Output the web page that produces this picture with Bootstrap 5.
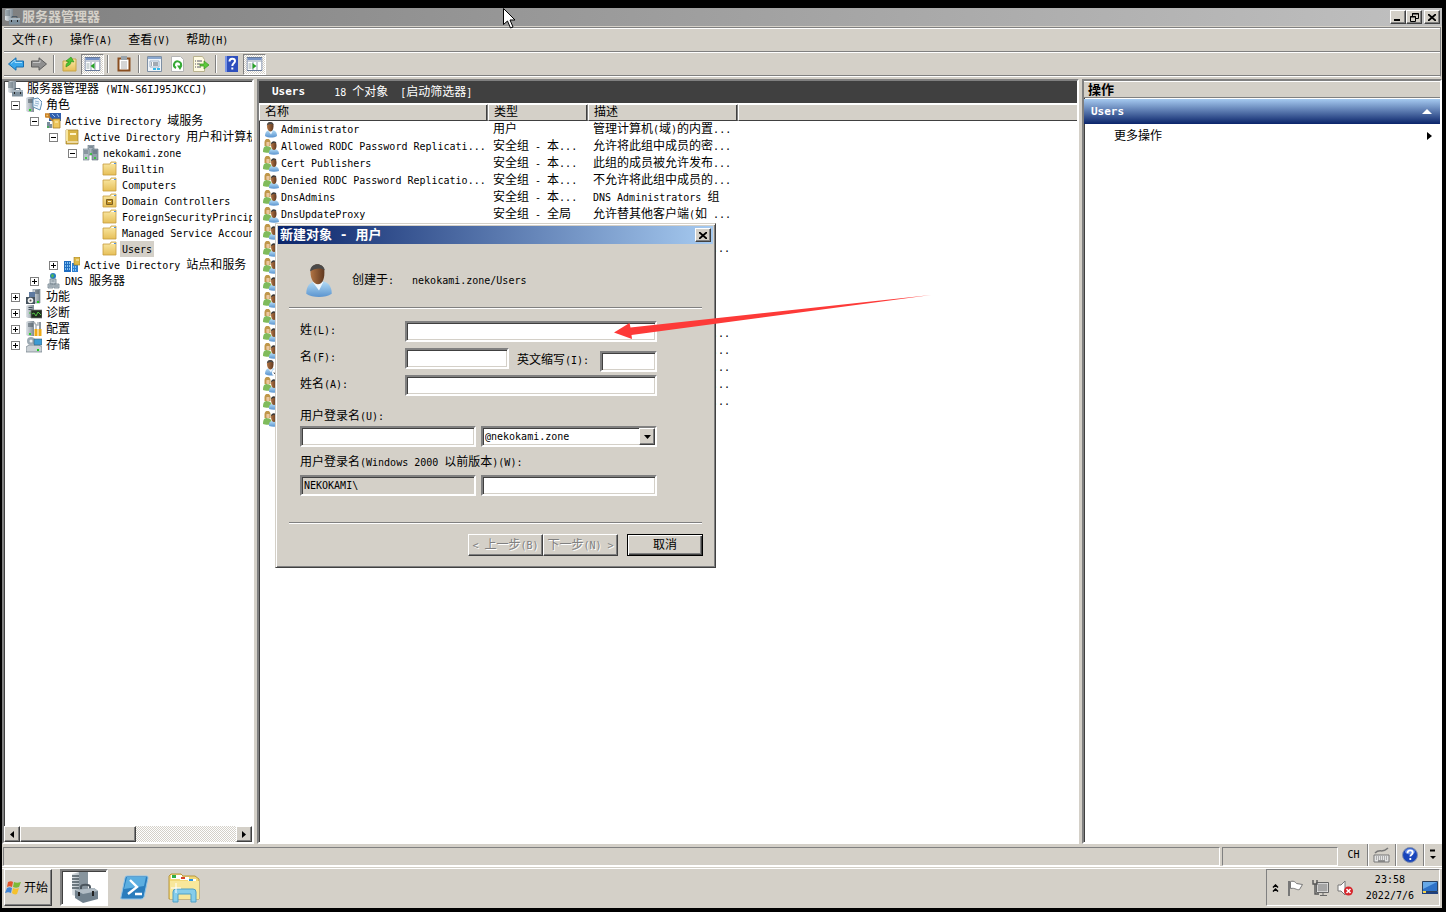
<!DOCTYPE html>
<html lang="zh-CN">
<head>
<meta charset="utf-8">
<meta name="viewport" content="width=device-width, initial-scale=1">
<title>服务器管理器</title>
<link href="https://cdn.jsdelivr.net/npm/bootstrap@5.3.0/dist/css/bootstrap.min.css" rel="stylesheet">
<style>
:root{--face:#d4d0c8;--shade:#808080;--dark:#404040}
body{background:#000;color:#000;font-family:"DejaVu Sans Mono","Noto Sans CJK SC",monospace;font-size:12px;line-height:16px;white-space:nowrap;padding:8px 4px 4px 2px;overflow:hidden}
button,input,select{font:inherit;color:inherit;border-radius:0;padding:0;margin:0}
svg{display:block;flex:none}
.en{font-size:10px;white-space:pre}
.cap-en{font-size:11px;font-weight:700}
.face{background:var(--face)}
.out{background:var(--face);border:1px solid;border-color:#fff var(--dark) var(--dark) #fff;box-shadow:inset -1px -1px var(--shade)}
.sunk{background:#fff;border:2px solid;border-color:var(--shade) #fff #fff var(--shade);box-shadow:inset 1px 1px var(--dark)}
.titlebar{height:18px;padding:0 2px;gap:2px;background:linear-gradient(90deg,#808080,#c0c0c0);color:var(--face);font-size:13px;font-weight:700}
.capbtn{width:16px;height:14px}
.titlebar .capbtn+.capbtn{margin-left:-2px}
.titlebar .capbtn:last-child{margin-left:0}
.frame{margin:1px 1px 0 2px;border:1px solid var(--shade);border-left:0;border-bottom-color:#fff}
.menubar{height:24px;border-top:1px solid #fff;border-bottom:1px solid var(--shade)}
.menubar a{color:#000;text-decoration:none;padding:1px 8px 0}
.toolbar{height:24px;border-top:1px solid #fff;border-bottom:1px solid var(--shade)}
.tool{width:23px;height:21px;border:0;background:none;display:flex;align-items:center;justify-content:center}
.tool.on{background:repeating-conic-gradient(#fff 0 25%,var(--face) 0 50%) 0 0/2px 2px;border:1px solid;border-color:var(--shade) #fff #fff var(--shade)}
.split{width:2px;height:18px;margin:0 3px;border-left:1px solid var(--shade);border-right:1px solid #fff}
.work{margin-top:2px;gap:3px;min-height:0}
.treepane{width:252px}
.actpane{width:360px}
.tree,.tree ul{list-style:none;margin:0;padding:0}
.tree{padding:0 0 0 3px}
.tree ul ul{padding-left:19px}
.node{display:flex;align-items:center;height:16px}
.node .cell{width:19px;flex:none;display:flex;padding-left:4px}
.box{width:9px;height:9px;border:1px solid var(--shade);background:linear-gradient(#000,#000) center/5px 1px no-repeat #fff}
.box.plus{background:linear-gradient(#000,#000) center/5px 1px no-repeat,linear-gradient(#000,#000) center/1px 5px no-repeat,#fff}
.node .txt{padding:1px 2px 0;margin-left:2px;line-height:15px}
.hbar{height:16px;background:repeating-conic-gradient(#fff 0 25%,var(--face) 0 50%) 0 0/2px 2px}
.hbar button{width:16px}
.thumb{width:116px}
.banner{height:23px;gap:29px;background:var(--dark);color:#fff;border-bottom:1px solid #fff;padding-left:13px}
.list{table-layout:fixed;width:100%;border-collapse:separate;border-spacing:0}
.list th{height:17px;line-height:15px;font-weight:400;padding:0 5px;background:var(--face);border:1px solid;border-color:#fff var(--shade) var(--dark) #fff;box-shadow:inset -1px 0 var(--dark)}
.list th:last-child{border-right:0;box-shadow:none}
.list td{height:17px;line-height:17px;padding:0 5px;overflow:hidden}
.list td:first-child{padding:0 0 0 4px}
.list td:first-child div{display:flex;align-items:center;gap:2px;height:17px}
.list td.tail{text-align:right;padding-right:8px}
.acthead{height:17px;line-height:15px;font-size:13px;font-weight:700;border-top:1px solid #fff;border-bottom:1px solid var(--shade);padding-left:4px}
.actgrp{height:25px;margin-top:1px;background:linear-gradient(#a6caf0,#0a246a);color:#fff;padding:0 8px 0 7px}
.actmore{padding:4px 8px 0 30px}
.dlg{position:absolute;left:16px;top:142px;width:441px;padding:2px 2px 11px;border:1px solid;border-color:var(--face) var(--dark) var(--dark) var(--face);box-shadow:inset 1px 1px #fff,inset -1px -1px var(--shade)}
.dlgcap{height:18px;padding:0 2px;background:linear-gradient(90deg,#0a246a,#a6caf0);color:#fff;font-size:13px;font-weight:700}
.etch{height:2px;margin:0 11px;background:linear-gradient(var(--shade) 50%,#fff 50%)}
.who{height:63px;padding:10px 24px 0}
.who .lbl{margin:0 18px 0 15px}
.fields{padding:12px 56px 26px 22px}
.fld{display:grid;grid-template-columns:105px 104px 91px 57px;height:27px;align-items:start}
.fld label{line-height:18px}
.fld .low{padding-top:3px}
.wide{grid-column:span 3}
.lab-u{display:block;padding:6px 0 1px}
.lab-w{display:block;padding:7px 0 4px}
.inp{height:21px;width:100%;border:2px solid;border-color:var(--shade) #fff #fff var(--shade);box-shadow:inset 1px 1px var(--dark),inset -1px -1px var(--face);background:#fff;font-size:10px;padding:0 2px;outline:0}
.wide.inp{width:252px}
.inp[readonly]{background:var(--face)}
.pair{display:grid;grid-template-columns:176px 176px;gap:5px}
.combo{position:relative}
.combo select{appearance:none}
.combo .drop{position:absolute;right:2px;top:2px;width:16px;height:17px;pointer-events:none}
.push{width:75px;height:22px;color:#000}
.push:disabled{color:var(--shade);text-shadow:1px 1px #fff}
.push.def{width:76px;margin-left:9px;border-color:#000;box-shadow:inset 1px 1px #fff,inset -1px -1px var(--dark),inset -2px -2px var(--shade)}
.dlgfoot{padding:10px 10px 0}
.pointer{position:absolute;left:355px;top:213px}
.mouse{position:absolute;left:503px;top:8px;z-index:9}
.status{height:22px;gap:2px;padding:0 1px}
.seg{margin-top:3px;border:1px solid;border-color:var(--shade) #fff #fff var(--shade)}
.seg.side{width:116px}
.lang{width:101px}
.lang>*{width:28px;border-right:1px solid var(--shade);box-shadow:1px 0 #fff;display:flex;align-items:center;justify-content:center}
.lang>:last-child{width:17px;border:0;box-shadow:none}
.taskbar{height:42px;border-top:1px solid #fff;box-shadow:inset 0 1px var(--face),inset 0 2px #fff;padding:2px 2px 2px}
.start{width:48px;gap:2px}
.task{width:48px;margin-left:2px;display:flex;align-items:center;justify-content:center;border:0;background:none}
.task.sunk{margin-left:8px;background:#fff;border:2px solid;border-color:var(--shade) #fff #fff var(--shade)}
.tray{width:174px;border:1px solid;border-color:var(--shade) #fff #fff var(--shade);padding:0 1px 0 5px;gap:8px}
</style>
</head>
<body class="vh-100 d-flex flex-column">
<svg width="0" height="0" class="position-absolute" aria-hidden="true">
<defs>
<linearGradient id="gb" x1="0" y1="0" x2="0" y2="1"><stop offset="0" stop-color="#b4dcf6"/><stop offset="1" stop-color="#5b94cf"/></linearGradient>
<linearGradient id="gy" x1="0" y1="0" x2="0" y2="1"><stop offset="0" stop-color="#fbeaa8"/><stop offset="1" stop-color="#e6bf58"/></linearGradient>
<linearGradient id="gs" x1="0" y1="0" x2="1" y2="0"><stop offset="0" stop-color="#dfe4e8"/><stop offset="1" stop-color="#7d8a94"/></linearGradient>
<linearGradient id="gh" x1="0" y1="0" x2="1" y2="0"><stop offset="0" stop-color="#b27443"/><stop offset="1" stop-color="#5f3820"/></linearGradient>
</defs>
<symbol id="srv" viewBox="0 0 16 16"><path d="M0 1l2-1h6v13H2l-2-1z" fill="url(#gs)"/><path d="M2.500 2.500h4M2.500 4.500h4" stroke="#44525c"/><path d="M3 8h2" stroke="#35c035"/></symbol>
<symbol id="mgr" viewBox="0 0 16 16"><path d="M1 1l2-1h6v12H3l-2-1z" fill="url(#gs)"/><path d="M1 2h5M1 4h5M1 6h5" stroke="#4a5a66" stroke-width=".8"/><path d="M8 9V7.500h5V9" fill="none" stroke="#4c5a66"/><path d="M5 9h11v6.500H5z" fill="#7e909d"/><path d="M5 9h11v2H5z" fill="#a9b7c1"/><path d="M7.500 11v2M13.500 11v2" stroke="#222"/></symbol>
<symbol id="roles" viewBox="0 0 16 16"><path d="M0 1l2-1h6v15H2l-2-1z" fill="url(#gs)"/><path d="M2 3h5M2 5h5" stroke="#44525c"/><path d="M3 13h2" stroke="#2fd12f" stroke-width="2"/><path d="M7 2l5-1 4 4-2 8-7-3z" fill="#edf5fb" stroke="#5f8fb5"/><path d="M9 4l4 1M9 6l4 1M8 8l4 1" stroke="#7da6c8" stroke-width=".8"/></symbol>
<symbol id="adds" viewBox="0 0 16 16"><path d="M4 0h12v8H4z" fill="#2f5fae"/><path d="M7 1l3 3M12 1l2 3" stroke="#9dc1ec"/><path d="M0 1h4v3H1zM4 4l4 4" fill="#f3c46c" stroke="#c98024" stroke-width="1.600"/><path d="M8 6h7v9H8z" fill="#edc65c" stroke="#a88228" stroke-width=".8"/><path d="M10 9h3" stroke="#fff3c2"/><path d="M2 9h3v6H2zM5 11h2v4H5z" fill="#798d9b"/><path d="M2 14h2" stroke="#25c025"/></symbol>
<symbol id="book" viewBox="0 0 16 16"><path d="M2 1h12v14H2z" fill="#d9b445" stroke="#9d7d27" stroke-width=".7"/><path d="M2 1h2v11H2z" fill="#f8e69f"/><path d="M6 4h6v2H6z" fill="#fff4c9"/><path d="M3 12.500h11v1H3z" fill="#fff"/></symbol>
<symbol id="dom" viewBox="0 0 16 16"><path d="M5 0h6v10H5z" fill="#a9b5bd" stroke="#60707c" stroke-width=".6"/><path d="M0 4h6v11H0z" fill="#b7c2c9" stroke="#687884" stroke-width=".6"/><path d="M9 4h6v11H9z" fill="#92a0aa" stroke="#5e6e7a" stroke-width=".6"/><path d="M1 6h4M1 8h4M10 6h4M10 8h4M6 2h4" stroke="#43545f" stroke-width=".8"/><path d="M2 13h2M11 13h2M7 9h2" stroke="#22cc22" stroke-width="1.500"/></symbol>
<symbol id="fold" viewBox="0 0 16 16"><path d="M1 14V3h7l1-2h5v13z" fill="url(#gy)" stroke="#c79d3e" stroke-width=".8"/><path d="M9.500 2.500h4" stroke="#fff"/><path d="M12 2.500h2" stroke="#4c91df"/></symbol>
<symbol id="ou" viewBox="0 0 16 16"><use href="#fold"/><path d="M4.500 6.500h6v5h-6z" fill="#c19126" stroke="#7e6020"/><path d="M6 8.500h3" stroke="#fff4bf"/></symbol>
<symbol id="sites" viewBox="0 0 16 16"><path d="M0 4h7v11H0z" fill="#1e6cc0"/><path d="M8 6h6v9H8z" fill="#2d7fd0"/><path d="M1 6h5M1 9h5M1 12h5M9 10h4M9 13h4" stroke="#a2dcff" stroke-dasharray="1 1" stroke-width="1.500"/><path d="M10 0h6v8h-6z" fill="#dfb948" stroke="#9d7d27" stroke-width=".6"/><path d="M12 3h3" stroke="#fff4c9"/></symbol>
<symbol id="dns" viewBox="0 0 16 16"><circle cx="8" cy="3" r="3" fill="#267fc0"/><path d="M6 2l2-1 1 2-2 2z" fill="#52bb4c"/><path d="M5 6h6v5H5zM3 11h5v4H3zM9 11h5v4H9z" fill="#c1cbd2" stroke="#74838e" stroke-width=".8"/><path d="M6.500 8h3M4 13h3M10 13h3" stroke="#5f6f7a" stroke-width=".7"/></symbol>
<symbol id="feat" viewBox="0 0 16 16"><path d="M7 0h7v14H7z" fill="url(#gs)" stroke="#71808b" stroke-width=".6"/><path d="M3 3h6v9H3z" fill="#5e7aa0"/><path d="M9 2h4M9 4h4" stroke="#44525c"/><path d="M0 8h9v7H0z" fill="#45525c"/><circle cx="4.500" cy="11.500" r="2.800" fill="#eee"/><circle cx="4.500" cy="11.500" r="1" fill="#555"/><path d="M11 13h2" stroke="#2c2" stroke-width="2"/></symbol>
<symbol id="diag" viewBox="0 0 16 16"><use href="#srv"/><path d="M5 5h11v8H5z" fill="#1f2a1e" stroke="#777" stroke-width=".7"/><path d="M6 9l2-1 2 3 2-4 3 3" fill="none" stroke="#55c345"/></symbol>
<symbol id="conf" viewBox="0 0 16 16"><path d="M0 1l2-1h6v15H2l-2-1z" fill="url(#gs)"/><path d="M2 3h5M2 5h5" stroke="#44525c"/><path d="M3 13h2" stroke="#2fd12f" stroke-width="2"/><path d="M8 1l2 3 2 0v-3M10 4v5" fill="none" stroke="#aeb5ba" stroke-width="1.500"/><path d="M10 8v7M14 8v7" stroke="#eeaa16" stroke-width="3"/><path d="M14 1v7" stroke="#8d989f" stroke-width="2"/></symbol>
<symbol id="stor" viewBox="0 0 16 16"><path d="M0 10l3-2h10l3 2v5H0z" fill="#cbd1d5" stroke="#6f7d88" stroke-width=".7"/><circle cx="5" cy="4" r="4" fill="#9daab3"/><circle cx="5" cy="4" r="1.500" fill="#eee"/><path d="M8 2h8v6H8z" fill="#3c9bd3" stroke="#41606f" stroke-width=".6"/><path d="M11 13h2" stroke="#2c2" stroke-width="2"/></symbol>
<symbol id="usr" viewBox="0 0 16 16"><path d="M2 14c0-4 2-6 6-6s6 2 6 6c-3 2-9 2-12 0z" fill="url(#gb)"/><path d="M5 8.500l3 4 2-4z" fill="#eef6fc"/><path d="M4 4c0-5 6-5 6.500-1 .3 4-1 6.500-3 6.500S4 7 4 4z" fill="url(#gh)"/><path d="M3.800 3.500C4-1 10-1 10.800 3 9 1.500 6 2 3.800 3.500z" fill="#4a4a4a"/></symbol>
<symbol id="dis" viewBox="0 0 16 16"><use href="#usr"/><circle cx="12.500" cy="12.500" r="3.500" fill="#fff"/><path d="M12.500 10v4M11 12.500l1.500 2 1.500-2" fill="none" stroke="#222"/></symbol>
<symbol id="grp" viewBox="0 0 16 16"><path d="M0 13c0-4 1-6 4-6s5 2 5 6c-2 1-7 1-9 0z" fill="#7fbb5c"/><path d="M1.500 3.500c0-5 6-5 6 0V7h-6z" fill="#c0974a"/><path d="M3.500 3h3c.3 3 0 4.500-1.500 4.500S3 6 3.500 3z" fill="#eac7a0"/><path d="M6 15c0-4 1-5 4-5s6 1 6 5c-3 1-7 1-10 0z" fill="url(#gb)"/><path d="M8 6c0-4 5.500-4 5.500 0 .3 3-1 5-2.500 5S8 9 8 6z" fill="url(#gh)"/><path d="M8 5.500c0-4 5-4 5.500-1-1-1-4-1-5.500 1z" fill="#333"/></symbol>
<symbol id="pane" viewBox="0 0 16 16"><path d="M.5 1.500h15v13H.5z" fill="#fff" stroke="#66799a"/><path d="M1 3h14" stroke="#7592c6" stroke-width="2"/><path d="M1 5h14M6.500 6v8M10.500 6v8" stroke="#8f9cb0"/><path d="M2 8h3M2 10h3M2 12h3" stroke="#9aa"/></symbol>
<symbol id="x" viewBox="0 0 8 7"><path d="M0 0l8 7M8 0L0 7" stroke="#000" stroke-width="1.800"/></symbol>
<symbol id="hlp" viewBox="0 0 16 16"><circle cx="8" cy="8" r="7.500" fill="#1945bb" stroke="#8290ac"/><ellipse cx="8" cy="4.500" rx="5" ry="3" fill="#648be6"/><path d="M5.500 6.300c0-4 5.200-3.500 5.200-.5 0 2-2.400 1.800-2.400 3.700M8.300 11v2" stroke="#fff" stroke-width="1.800" fill="none"/></symbol>
</svg>

<header class="face">
  <div class="titlebar d-flex align-items-center">
    <svg width="16" height="16"><use href="#mgr"/></svg><span class="flex-grow-1">服务器管理器</span>
    <button class="out capbtn d-flex align-items-end justify-content-center" aria-label="最小化"><svg width="8" height="4"><path d="M0 1h6" stroke="#000" stroke-width="2"/></svg></button>
    <button class="out capbtn d-flex align-items-center justify-content-center" aria-label="还原"><svg width="9" height="9"><path d="M2.500 3V.500h6v5H6M.500 3.500h5v5h-5zM2 1h7M0 4h6" fill="none" stroke="#000"/></svg></button>
    <button class="out capbtn d-flex align-items-center justify-content-center" aria-label="关闭"><svg width="8" height="7"><use href="#x"/></svg></button>
  </div>
  <div class="frame">
    <nav class="menubar d-flex align-items-center">
      <a href="#">文件<span class="en">(F)</span></a><a href="#">操作<span class="en">(A)</span></a><a href="#">查看<span class="en">(V)</span></a><a href="#">帮助<span class="en">(H)</span></a>
    </nav>
    <div class="toolbar d-flex align-items-center">
      <button class="tool" aria-label="后退"><svg width="16" height="14"><path d="M.5 7L8 .8V4h7.500v6H8v3.200z" fill="#39a6ea" stroke="#176eb0"/><path d="M3 6.500L7 3v2.500h7" fill="none" stroke="#a9e0ff"/></svg></button>
      <button class="tool" aria-label="前进"><svg width="16" height="14"><path d="M15.500 7L8 .8V4H.5v6H8v3.200z" fill="#8f8f8f" stroke="#5d5d5d"/><path d="M2 5.500h7V3" fill="none" stroke="#c5c5c5"/></svg></button>
      <span class="split"></span>
      <button class="tool" aria-label="上移"><svg width="16" height="16"><path d="M1 15V5h6l1-2h6v12z" fill="url(#gy)" stroke="#c9a548"/><path d="M4 11c0-4 1-4 3-5L4 5l5-4 3 5-3-.5C9 9 7 9 4 11z" fill="#4bc431" stroke="#2c8a1a" stroke-width=".6"/></svg></button>
      <button class="tool on" aria-label="控制台树"><svg width="17" height="16" viewBox="0 0 16 16"><use href="#pane"/><path d="M10 7v6l-4-3z" fill="#27a327"/></svg></button>
      <span class="split"></span>
      <button class="tool" aria-label="粘贴"><svg width="14" height="16"><path d="M1.500 2.500h11v12h-11z" fill="#fff" stroke="#8a4e20" stroke-width="2"/><path d="M4 0h6v4H4z" fill="#9aa4ac"/><path d="M4 6h6M4 8h6M4 10h6M4 12h6" stroke="#aaa"/></svg></button>
      <span class="split"></span>
      <button class="tool" aria-label="属性"><svg width="16" height="16"><path d="M.5.500h14v15H.5z" fill="#f0f4f8" stroke="#7e8fa3"/><path d="M1 2h13" stroke="#8ba8cf" stroke-width="2"/><path d="M3 5h9v6H3z" fill="#fff" stroke="#9db1c8"/><path d="M4 7h1M6 7h5M4 9h1M6 9h5" stroke="#456"/><path d="M6 13h3M10 13h3" stroke="#39b8e8" stroke-width="2"/></svg></button>
      <button class="tool" aria-label="刷新"><svg width="14" height="16"><path d="M.5.500h9l3 3v12H.5z" fill="#fff" stroke="#b5b5b5"/><path d="M5 12A3.500 3.500 0 1 1 9.800 10" fill="none" stroke="#35a935" stroke-width="2"/><path d="M6 9.500h5.500L9 14z" fill="#35a935"/></svg></button>
      <button class="tool" aria-label="导出列表"><svg width="16" height="16"><path d="M.5.500h9l2 3v12H.5z" fill="#fffbe2" stroke="#b9b28e"/><path d="M2 5h1M4 5h5M2 8h1M4 8h3M2 11h1M4 11h4" stroke="#556"/><path d="M7 8h4V5l5 4-5 4v-3H7z" fill="#5bc93b" stroke="#3b9722" stroke-width=".7"/></svg></button>
      <span class="split"></span>
      <button class="tool" aria-label="帮助"><svg width="14" height="16"><path d="M0 0h13v16H0z" fill="#2e4fbd"/><path d="M0 0h2v16H0z" fill="#7b96e6"/><path d="M4.500 5.500c0-4 5.500-3.500 5.500-.5 0 2.500-2.700 2-2.700 5M7.300 11.500v2" stroke="#fff" stroke-width="2" fill="none"/></svg></button>
      <button class="tool on" aria-label="操作窗格"><svg width="17" height="16" viewBox="0 0 16 16"><use href="#pane"/><path d="M6 7v6l4-3z" fill="#27a327"/></svg></button>
    </div>
  </div>
</header>

<main class="face flex-grow-1 d-flex flex-column" style="min-height:0">
  <div class="work d-flex flex-grow-1">
    <aside class="treepane sunk d-flex flex-column flex-shrink-0 overflow-hidden">
      <ul class="tree flex-grow-1 overflow-hidden">
        <li><div class="node"><svg width="16" height="16"><use href="#mgr"/></svg><span class="txt">服务器管理器<span class="en"> (WIN-S6IJ95JKCCJ)</span></span></div>
          <ul>
            <li><div class="node"><span class="cell"><i class="box"></i></span><svg width="16" height="16"><use href="#roles"/></svg><span class="txt">角色</span></div>
              <ul>
                <li><div class="node"><span class="cell"><i class="box"></i></span><svg width="16" height="16"><use href="#adds"/></svg><span class="txt"><span class="en">Active Directory </span>域服务</span></div>
                  <ul>
                    <li><div class="node"><span class="cell"><i class="box"></i></span><svg width="16" height="16"><use href="#book"/></svg><span class="txt"><span class="en">Active Directory </span>用户和计算机</span></div>
                      <ul>
                        <li><div class="node"><span class="cell"><i class="box"></i></span><svg width="16" height="16"><use href="#dom"/></svg><span class="txt en">nekokami.zone</span></div>
                          <ul id="kids"></ul>
                        </li>
                      </ul>
                    </li>
                    <li><div class="node"><span class="cell"><i class="box plus"></i></span><svg width="16" height="16"><use href="#sites"/></svg><span class="txt"><span class="en">Active Directory </span>站点和服务</span></div></li>
                  </ul>
                </li>
                <li><div class="node"><span class="cell"><i class="box plus"></i></span><svg width="16" height="16"><use href="#dns"/></svg><span class="txt"><span class="en">DNS </span>服务器</span></div></li>
              </ul>
            </li>
            <li><div class="node"><span class="cell"><i class="box plus"></i></span><svg width="16" height="16"><use href="#feat"/></svg><span class="txt">功能</span></div></li>
            <li><div class="node"><span class="cell"><i class="box plus"></i></span><svg width="16" height="16"><use href="#diag"/></svg><span class="txt">诊断</span></div></li>
            <li><div class="node"><span class="cell"><i class="box plus"></i></span><svg width="16" height="16"><use href="#conf"/></svg><span class="txt">配置</span></div></li>
            <li><div class="node"><span class="cell"><i class="box plus"></i></span><svg width="16" height="16"><use href="#stor"/></svg><span class="txt">存储</span></div></li>
          </ul>
        </li>
      </ul>
      <div class="hbar d-flex">
        <button class="out d-flex align-items-center justify-content-center" aria-label="向左"><svg width="4" height="7"><path d="M4 0v7L0 3.500z"/></svg></button>
        <div class="out thumb"></div>
        <button class="out ms-auto d-flex align-items-center justify-content-center" aria-label="向右"><svg width="4" height="7"><path d="M0 0v7l4-3.500z"/></svg></button>
      </div>
    </aside>

    <section class="sunk flex-grow-1 position-relative" style="min-width:0">
      <div class="banner d-flex align-items-center"><span class="cap-en">Users</span><span><span class="en">18 </span>个对象<span class="en">  [</span>启动筛选器<span class="en">]</span></span></div>
      <table class="list">
        <colgroup><col style="width:229px"><col style="width:100px"><col style="width:150px"><col></colgroup>
        <thead><tr><th>名称</th><th>类型</th><th>描述</th><th></th></tr></thead>
        <tbody id="rows"></tbody>
      </table>

      <form class="dlg face" onsubmit="return false">
        <div class="dlgcap d-flex align-items-center"><span class="flex-grow-1">新建对象 - 用户</span><button type="button" class="out capbtn d-flex align-items-center justify-content-center" aria-label="关闭"><svg width="8" height="7"><use href="#x"/></svg></button></div>
        <div class="who d-flex align-items-center"><svg width="34" height="34"><use href="#usr"/></svg><span class="lbl ms-3">创建于<span class="en">:</span></span><span class="en">nekokami.zone/Users</span></div>
        <div class="etch"></div>
        <div class="fields">
          <div class="fld"><label for="sn">姓<span class="en">(L):</span></label><input id="sn" class="inp wide" autofocus></div>
          <div class="fld"><label for="gn">名<span class="en">(F):</span></label><input id="gn" class="inp"><label for="ini" class="low ps-2">英文缩写<span class="en">(I):</span></label><div class="low d-flex"><input id="ini" class="inp"></div></div>
          <div class="fld"><label for="fn">姓名<span class="en">(A):</span></label><input id="fn" class="inp wide"></div>
          <label for="upn" class="lab-u">用户登录名<span class="en">(U):</span></label>
          <div class="pair"><input id="upn" class="inp"><div class="combo"><select class="inp d-block" aria-label="域后缀"><option>@nekokami.zone</option></select><span class="drop out d-flex align-items-center justify-content-center"><svg width="7" height="4"><path d="M0 0h7L3.500 4z"/></svg></span></div></div>
          <label for="sam" class="lab-w">用户登录名<span class="en">(Windows 2000 </span>以前版本<span class="en">)(W):</span></label>
          <div class="pair"><input class="inp" readonly value="NEKOKAMI\" aria-label="域"><input id="sam" class="inp"></div>
        </div>
        <div class="etch"></div>
        <div class="dlgfoot d-flex justify-content-end"><button class="out push" disabled><span class="en">&lt; </span>上一步<span class="en">(B)</span></button><button class="out push" disabled>下一步<span class="en">(N) &gt;</span></button><button type="button" class="out push def">取消</button></div>
      </form>
      <svg class="pointer" width="318" height="46" aria-hidden="true"><path d="M0 38.500L15.500 29l1 4.500L317 1 17.500 41l.5 4z" fill="#fd3a38"/></svg>
    </section>

    <aside class="actpane sunk flex-shrink-0">
      <div class="acthead face">操作</div>
      <div class="actgrp d-flex align-items-center justify-content-between"><span class="cap-en">Users</span><svg width="10" height="5"><path d="M5 0l5 5H0z" fill="#fff"/></svg></div>
      <div class="actmore d-flex align-items-center justify-content-between"><span>更多操作</span><svg width="5" height="8"><path d="M0 0l5 4-5 4z"/></svg></div>
    </aside>
  </div>

  <div class="status d-flex">
    <div class="seg flex-grow-1"></div>
    <div class="seg side"></div>
    <div class="lang d-flex">
      <span class="en">CH</span>
      <span><svg width="17" height="16"><path d="M1 8h15v7H1z" fill="#e5e5e5" stroke="#777"/><path d="M3 10h11M3 12h11" stroke="#777" stroke-dasharray="1 1"/><path d="M5 14h7M2 6c5-5 7 1 13-5" fill="none" stroke="#777" stroke-width="1.500"/></svg></span>
      <span><svg width="16" height="16"><use href="#hlp"/></svg></span>
      <span><svg width="6" height="12"><path d="M0 1.500h5" stroke="#000" stroke-width="2"/><path d="M0 7h6l-3 3z"/></svg></span>
    </div>
  </div>
</main>

<footer class="taskbar face d-flex">
  <button class="out start d-flex align-items-center"><svg width="17" height="16" viewBox="0 0 17 16" aria-hidden="true"><path d="M3 2c2-1 4-1 5 0L7 7c-2-1-3-1-5 0z" fill="#e2552b"/><path d="M9 2c2 1 4 1 7 0l-2 5c-2 1-4 1-6 0z" fill="#7cba36"/><path d="M2 8c2-1 3-1 5 0l-1 5c-2-1-3-1-6 0z" fill="#3f83d5"/><path d="M8 8c2 1 4 1 6 0l-2 6c-2 1-4 0-5-1z" fill="#f5c12c"/></svg>开始</button>
  <button class="task sunk" aria-label="服务器管理器"><svg width="34" height="34" viewBox="0 0 34 34"><path d="M5 3l7-2h9v22l-9 3-7-2z" fill="url(#gs)"/><path d="M12 1h9v24l-9 1z" fill="#87949d"/><path d="M5 5h7M5 8h7M5 11h7M5 14h7M5 17h7" stroke="#4c5962" stroke-width="1.500"/><path d="M14 18v-2c0-3 9-3 9 0v2" fill="none" stroke="#4b555d" stroke-width="2"/><path d="M8 19l19-2 4 3v8l-15 4-8-5z" fill="#71818d"/><path d="M8 19l19-2 4 3-15 3z" fill="#b1bcc4"/><path d="M12 21v4M26 20v5" stroke="#222" stroke-width="2"/></svg></button>
  <button class="task" aria-label="PowerShell"><svg width="29" height="25"><path d="M7 1h20q1 0 1 2l-4 19q-1 2-3 2H2q-2 0-1-2L5 3q0-2 2-2z" fill="#2a7dbd" stroke="#8fc4e8"/><path d="M7 2h19l-2 9L4 14z" fill="#5caee0"/><path d="M10 5l7 7-9 7M15 19h7" fill="none" stroke="#fff" stroke-width="2.400"/></svg></button>
  <button class="task" aria-label="资源管理器"><svg width="33" height="31"><path d="M1 4l2-2h10l2 2h12l4 3v20H1z" fill="#f1d878" stroke="#b9973c"/><path d="M3 3h11v4H3zM12 5h9v3h-9zM20 7h8v3h-8z" fill="#fff"/><path d="M4 3h4v3H4z" fill="#2fae47"/><path d="M13 5h4v2h-4z" fill="#d8442c"/><path d="M21 7h4v2h-4z" fill="#2b94df"/><path d="M2 9h29v18H2z" fill="#f8e79b"/><path d="M5 30V20q0-3 3-3h17q3 0 3 3v10h-5v-8H10v8z" fill="#86cdea" stroke="#4f9fc6"/><path d="M8 11v10M3 16h10" stroke="#fff"/></svg></button>
  <div class="tray ms-auto d-flex align-items-center">
    <svg width="7" height="8"><path d="M1 3.500l2.500-2.500L6 3.500M1 7.500L3.500 5 6 7.500" fill="none" stroke="#000" stroke-width="1.500"/></svg>
    <svg width="17" height="16"><path d="M2 1v15" stroke="#777" stroke-width="2"/><path d="M3.500 1.500c4-1 5 1 6 2l6 1-3 5c-3 1-4-2-9-1z" fill="#fff" stroke="#777"/></svg>
    <svg width="17" height="16"><path d="M5 3h11v9H5z" fill="#a5a5a5" stroke="#fff"/><path d="M4.500 2.500h12v10h-12zM8 15.500h7M11 13v2" fill="none" stroke="#666"/><path d="M1 0v4h4V0M3 4v10h4" fill="none" stroke="#555" stroke-width="1.400"/></svg>
    <svg width="17" height="16"><path d="M1 5h3l4-4v14l-4-4H1z" fill="#fff" stroke="#777"/><circle cx="11.500" cy="11" r="4.500" fill="#d7262c"/><path d="M9.500 9l4 4M13.500 9l-4 4" stroke="#fff" stroke-width="1.500"/></svg>
    <div class="en text-center ms-auto">23:58<br>2022/7/6</div>
    <svg width="16" height="13"><path d="M.5.500h15v10H.5z" fill="#2e72c8" stroke="#29405f"/><path d="M1 1h14L1 8z" fill="#66a8e8"/><path d="M0 11h16v2H0z" fill="#1d3f7d"/><path d="M1 11h3" stroke="#f4d24a" stroke-width="2"/></svg>
  </div>
</footer>
<svg class="mouse" width="13" height="22" aria-hidden="true"><path d="M.5.500v16l4-3.500 3 7 2.500-1-3-7h5z" fill="#fff" stroke="#000"/></svg>

<script>
// Latin runs use the smaller half-width size
function mix(s){return s.replace(/[\x20-\x7e]+/g,function(m){return '<span class="en">'+m+'</span>'})}
var rows=[['usr','Administrator','用户','管理计算机(域)的内置...'],
['grp','Allowed RODC Password Replicati...','安全组 - 本...','允许将此组中成员的密...'],
['grp','Cert Publishers','安全组 - 本...','此组的成员被允许发布...'],
['grp','Denied RODC Password Replicatio...','安全组 - 本...','不允许将此组中成员的...'],
['grp','DnsAdmins','安全组 - 本...','DNS Administrators 组'],
['grp','DnsUpdateProxy','安全组 - 全局','允许替其他客户端(如 ...']];
var more=[0,1,0,0,0,0,1,1,1,1,1,0];
document.getElementById('rows').innerHTML=rows.map(function(r){
  return '<tr><td><div><svg width="16" height="16"><use href="#'+r[0]+'"/></svg><span>'+mix(r[1])+'</span></div></td><td>'+mix(r[2])+'</td><td>'+mix(r[3])+'</td><td></td></tr>'}).join('')+
more.map(function(d,i){return '<tr><td><div><svg width="16" height="16"><use href="#'+(i===8?'dis':'grp')+'"/></svg></div></td><td></td><td class="tail">'+(d?'<span class="en">...</span>':'')+'</td><td></td></tr>'}).join('');
// Containers below the domain node
var kids=[['fold','Builtin'],['fold','Computers'],['ou','Domain Controllers'],['fold','ForeignSecurityPrincipals'],['fold','Managed Service Accounts'],['fold','Users']];
document.getElementById('kids').innerHTML=kids.map(function(k,i){
  return '<li><div class="node"><svg width="16" height="16" class="ms-0"><use href="#'+k[0]+'"/></svg><span class="txt en'+(i===5?' face':'')+'">'+k[1]+'</span></div></li>'}).join('');
document.getElementById('kids').style.paddingLeft='38px';
document.getElementById('sn').focus();
</script>
<script src="https://cdn.jsdelivr.net/npm/bootstrap@5.3.0/dist/js/bootstrap.bundle.min.js"></script>
</body>
</html>
